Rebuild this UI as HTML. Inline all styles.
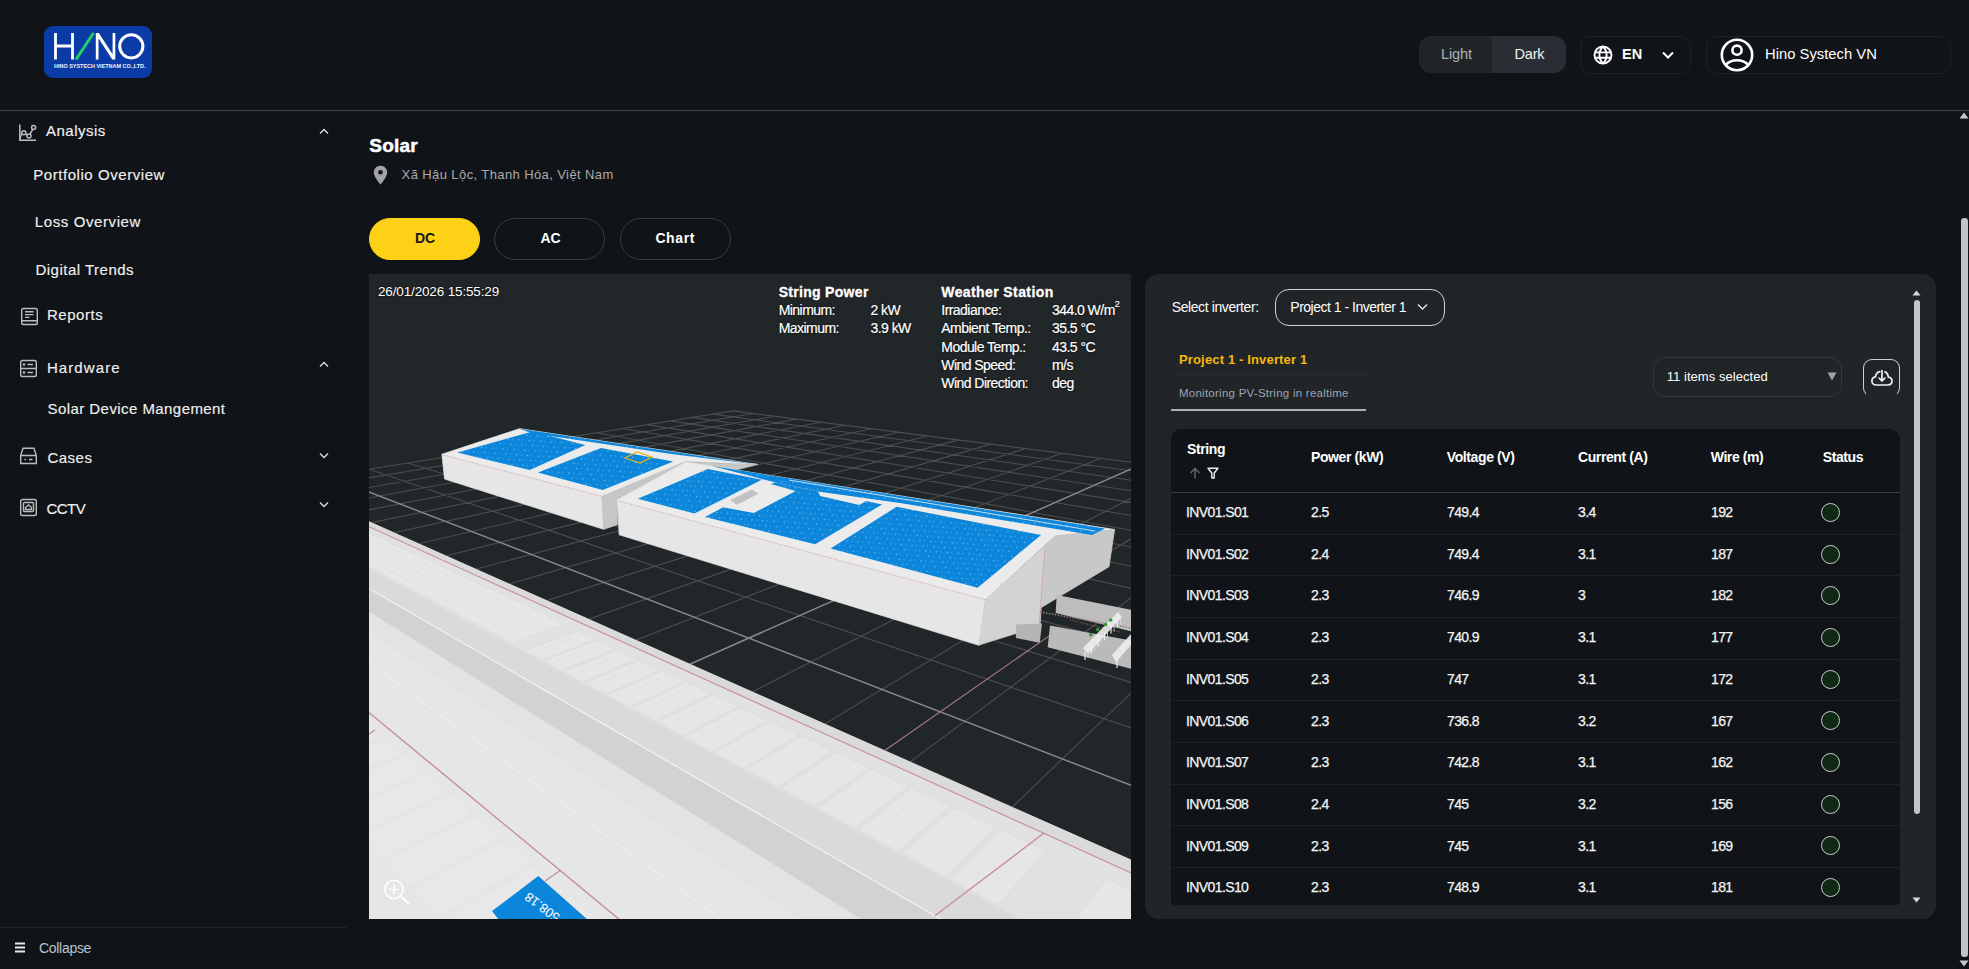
<!DOCTYPE html>
<html><head><meta charset="utf-8"><title>Solar</title>
<style>
html,body{margin:0;padding:0}
body{width:1969px;height:969px;overflow:hidden;background:#101418;position:relative;font-family:"Liberation Sans",sans-serif}
.abs{position:absolute}
.t{position:absolute;white-space:nowrap;line-height:1}
.t sup{font-size:9px;vertical-align:top;line-height:1;position:relative;top:-3px}
.logo{position:absolute;left:44px;top:26px;width:108px;height:52px;background:#0a3ba6;border-radius:9px}
.logo svg{display:block}
.tog{position:absolute;left:1419px;top:36px;width:147px;height:37px;border-radius:12px;overflow:hidden}
.tl{position:absolute;left:0;top:0;width:73px;height:37px;background:#212528}
.tr{position:absolute;left:73px;top:0;width:74px;height:37px;background:#2a2e34}
.box{position:absolute;border:1px solid #221f1d;border-radius:10px}
.btn{position:absolute;top:218px;width:109px;height:40px;border:1px solid #3a3b3c;border-radius:21px}
.viewer{position:absolute;left:369px;top:274px;width:762px;height:645px;overflow:hidden}
.viewer svg{display:block}
.panel{position:absolute;left:1145px;top:274px;width:791px;height:645px;background:#212528;border-radius:14px}
.tbl{position:absolute;left:1171px;top:429px;width:729px;height:476px;background:#101418;border-radius:10px 10px 4px 4px}
.st{width:17px;height:17px;border:1.3px solid #c9c9c9;border-radius:50%;background:#0f2915}
</style></head><body>
<div class="logo"><svg width="108" height="52" viewBox="0 0 108 52">
<path d="M11.5 7V33.5M28.5 7V33.5M11.5 20H28.5" stroke="#fff" stroke-width="2.8" fill="none"/><polygon points="51.8,6.9 54.8,6.9 68.6,28.3 68.6,6.9 71.3,6.9 71.3,33.6 68.3,33.6 54.5,12.2 54.5,33.6 51.8,33.6" fill="#fff"/>
<path d="M32 33.5L49.5 7" stroke="#1fcf6a" stroke-width="3"/>
<circle cx="87.3" cy="20.3" r="11.6" stroke="#fff" stroke-width="3" fill="none"/>
<text x="10" y="41.6" font-family="Liberation Sans" font-size="5.6" font-weight="bold" fill="#f4f4f4" textLength="91.5" lengthAdjust="spacingAndGlyphs">HINO SYSTECH VIETNAM CO.,LTD.</text>
</svg></div>
<div class="tog"><div class="tl"></div><div class="tr"></div></div>
<div class="t " style="left:1441px;top:46.73px;font-size:14.5px;color:#a9b2bb;letter-spacing:-0.1px">Light</div>
<div class="t " style="left:1514.5px;top:46.73px;font-size:14.5px;color:#f2f2f2;letter-spacing:-0.2px">Dark</div>
<div class="box" style="left:1580px;top:36px;width:109px;height:36px"></div>
<svg class="abs" style="left:1593px;top:45px" width="20" height="20" viewBox="0 0 24 24" fill="none" stroke="#fff" stroke-width="2.3">
<circle cx="12" cy="12" r="10.2"/><path d="M12 1.8C15 4.8 16.3 8 16.3 12S15 19.2 12 22.2M12 1.8C9 4.8 7.7 8 7.7 12S9 19.2 12 22.2M2.5 8.8H21.5M2.5 15.2H21.5" /></svg>
<div class="t " style="left:1622px;top:47.43px;font-size:14.5px;font-weight:bold;color:#fff">EN</div>
<svg class="abs" style="left:1661px;top:50px" width="14" height="10" viewBox="0 0 14 10"><path d="M2 2.5L7 7.5L12 2.5" stroke="#fff" stroke-width="2" fill="none"/></svg>
<div class="box" style="left:1706px;top:36px;width:243px;height:36px"></div>
<svg class="abs" style="left:1720px;top:38px" width="34" height="34" viewBox="0 0 34 34" fill="none" stroke="#fff" stroke-width="2.6">
<circle cx="17" cy="17" r="15.2"/><circle cx="17" cy="12.2" r="4.6"/><path d="M5.5 27C9 23.6 13 22.3 17 22.3S25 23.6 28.5 27"/></svg>
<div class="t " style="left:1765px;top:47.17px;font-size:14.8px;color:#fff">Hino Systech VN</div>
<div class="abs" style="left:0;top:110px;width:1969px;height:1px;background:#474543"></div>
<svg class="abs" style="left:18px;top:123px" width="19" height="19" viewBox="0 0 19 19" fill="none" stroke="#bdbdbd" stroke-width="1.5">
<path d="M1.8 1.5V17.3H18"/><circle cx="5.8" cy="9.8" r="2"/><circle cx="11" cy="13" r="2"/><circle cx="15.6" cy="4.5" r="2"/><path d="M7.5 11L9.4 12.1M12 11.2L14.7 6.4M1.8 16C2.5 13 3.5 11.5 4.2 11"/></svg>
<div class="t " style="left:46px;top:123.30px;font-size:15px;color:#f0f0f0;-webkit-text-stroke:0.15px #f0f0f0;letter-spacing:0.5px">Analysis</div>
<svg class="abs" style="left:319px;top:128px" width="10" height="7" viewBox="0 0 10 7"><path d="M1 5.5L5 1.5L9 5.5" stroke="#e0e0e0" stroke-width="1.3" fill="none"/></svg>
<div class="t " style="left:33.2px;top:167.40px;font-size:15px;color:#f0f0f0;-webkit-text-stroke:0.15px #f0f0f0;letter-spacing:0.56px">Portfolio Overview</div>
<div class="t " style="left:34.8px;top:214.40px;font-size:15px;color:#f0f0f0;-webkit-text-stroke:0.15px #f0f0f0;letter-spacing:0.6px">Loss Overview</div>
<div class="t " style="left:35.4px;top:262.10px;font-size:15px;color:#f0f0f0;-webkit-text-stroke:0.15px #f0f0f0;letter-spacing:0.5px">Digital Trends</div>
<svg class="abs" style="left:20px;top:307px" width="19" height="19" viewBox="0 0 19 19" fill="none" stroke="#bdbdbd" stroke-width="1.4">
<rect x="1.7" y="1.5" width="15.6" height="16" rx="1.8"/><path d="M1.7 13.8H17.3M5 4.8H13.5M5 7.6H13.5M5 10.4H9.5"/></svg>
<div class="t " style="left:46.9px;top:307.10px;font-size:15px;color:#f0f0f0;-webkit-text-stroke:0.15px #f0f0f0;letter-spacing:0.55px">Reports</div>
<svg class="abs" style="left:19px;top:359px" width="19" height="19" viewBox="0 0 19 19" fill="none" stroke="#bdbdbd" stroke-width="1.4">
<rect x="1.7" y="1.5" width="15.6" height="16" rx="1.8"/><path d="M1.7 9.5H17.3M8.5 5.5H14M8.5 13.5H14"/><circle cx="5" cy="5.5" r="0.6" fill="#bdbdbd"/><circle cx="5" cy="13.5" r="0.6" fill="#bdbdbd"/></svg>
<div class="t " style="left:46.9px;top:359.70px;font-size:15px;color:#f0f0f0;-webkit-text-stroke:0.15px #f0f0f0;letter-spacing:1.1px">Hardware</div>
<svg class="abs" style="left:319px;top:361px" width="10" height="7" viewBox="0 0 10 7"><path d="M1 5.5L5 1.5L9 5.5" stroke="#e0e0e0" stroke-width="1.3" fill="none"/></svg>
<div class="t " style="left:47.6px;top:401.10px;font-size:15px;color:#f0f0f0;-webkit-text-stroke:0.15px #f0f0f0;letter-spacing:0.43px">Solar Device Mangement</div>
<svg class="abs" style="left:19px;top:446px" width="19" height="19" viewBox="0 0 19 19" fill="none" stroke="#bdbdbd" stroke-width="1.4">
<path d="M1.7 9.5L4 2.3H15L17.3 9.5V17.5H1.7Z M1.7 9.5H17.3M5.5 13.5H7M10 13.5H13.5"/></svg>
<div class="t " style="left:47.4px;top:450.00px;font-size:15px;color:#f0f0f0;-webkit-text-stroke:0.15px #f0f0f0;letter-spacing:0.5px">Cases</div>
<svg class="abs" style="left:319px;top:452px" width="10" height="7" viewBox="0 0 10 7"><path d="M1 1.5L5 5.5L9 1.5" stroke="#e0e0e0" stroke-width="1.3" fill="none"/></svg>
<svg class="abs" style="left:19px;top:498px" width="19" height="19" viewBox="0 0 19 19" fill="none" stroke="#bdbdbd" stroke-width="1.4">
<rect x="1.7" y="1.5" width="15.6" height="16" rx="1.8"/><rect x="4.5" y="4.5" width="10" height="9" rx="1"/><path d="M6.5 11.5V9.5L9.5 7L12.5 9.5V11.5Z"/></svg>
<div class="t " style="left:46.4px;top:501.10px;font-size:15px;color:#f0f0f0;-webkit-text-stroke:0.15px #f0f0f0;letter-spacing:-0.5px">CCTV</div>
<svg class="abs" style="left:319px;top:501px" width="10" height="7" viewBox="0 0 10 7"><path d="M1 1.5L5 5.5L9 1.5" stroke="#e0e0e0" stroke-width="1.3" fill="none"/></svg>
<div class="abs" style="left:0;top:927px;width:347px;height:1px;background:#26221f"></div>
<svg class="abs" style="left:15px;top:942px" width="10" height="11" viewBox="0 0 10 11"><path d="M0 1.5H10M0 5.5H10M0 9.5H10" stroke="#e8e8e8" stroke-width="1.8"/></svg>
<div class="t " style="left:39px;top:941.15px;font-size:14px;color:#b9c3cd;letter-spacing:-0.3px">Collapse</div>
<div class="t " style="left:369.3px;top:135.82px;font-size:19px;font-weight:bold;color:#fff;letter-spacing:0.2px;-webkit-text-stroke:0.5px #fff">Solar</div>
<svg class="abs" style="left:373px;top:165px" width="15" height="20" viewBox="0 0 15 20"><path d="M7.5 0.8C3.8 0.8 0.8 3.7 0.8 7.4C0.8 11.8 7.5 19.5 7.5 19.5S14.2 11.8 14.2 7.4C14.2 3.7 11.2 0.8 7.5 0.8Z" fill="#a3a3a3"/><circle cx="7.5" cy="7.3" r="2.3" fill="#101418"/></svg>
<div class="t " style="left:401.6px;top:167.70px;font-size:13px;color:#ababab;letter-spacing:0.4px">Xã Hậu Lộc, Thanh Hóa, Việt Nam</div>
<div class="btn" style="left:369px;background:#fcd116;border-color:#fcd116"></div>
<div class="btn" style="left:494px"></div>
<div class="btn" style="left:620px"></div>
<div class="t " style="left:415px;top:231.35px;font-size:14px;font-weight:bold;color:#16181b">DC</div>
<div class="t " style="left:540.5px;top:231.35px;font-size:14px;font-weight:bold;color:#fff">AC</div>
<div class="t " style="left:655.4px;top:231.35px;font-size:14px;font-weight:bold;color:#fff;letter-spacing:0.6px">Chart</div>
<div class="viewer"><svg width="762" height="645" viewBox="0 0 762 645">
<rect width="762" height="645" fill="#212629"/>
<path d="M364.0 136.9L1923.6 337.9M364.0 136.9L-1225.8 391.5M344.1 140.1L1975.1 361.4M384.4 139.5L-1278.0 417.8M323.2 143.4L2034.4 388.5M405.7 142.3L-1338.3 448.2M301.2 146.9L2103.4 420.0M428.0 145.1L-1408.6 483.6M278.1 150.6L2184.7 457.2M451.5 148.2L-1491.9 525.6M253.8 154.5L2282.1 501.7M476.2 151.3L-1592.0 576.0M228.1 158.7L2400.6 555.9M502.2 154.7L-1714.5 637.8M201.0 163.0L2548.0 623.2M529.7 158.2L-1867.9 715.1M172.3 167.6L2736.5 709.4M558.7 162.0L-2065.8 814.9M141.9 172.5L2986.0 823.4M589.3 165.9L-2330.5 948.3M109.7 177.6L3331.6 981.4M621.8 170.1L-2703.0 1136.0M75.4 183.1L3842.3 1214.8M656.3 174.6L-3265.8 1419.7M38.9 189.0L4673.5 1594.7M693.0 179.3L-4214.7 1898.0M-0.1 195.2L6265.0 2322.1M732.1 184.3L-5274.7 2531.8M-86.6 209.1L4855.0 2403.2M818.5 195.5L-3718.1 2512.1M-134.7 216.8L4060.2 2413.3M866.5 201.6L-2939.8 2502.2M-186.6 225.1L3265.4 2423.4M918.0 208.3L-2161.5 2492.3M-242.6 234.0L2470.6 2433.5M973.6 215.4L-1383.2 2482.4M-303.5 243.8L1675.8 2443.6M1033.7 223.2L-604.9 2472.6M-369.7 254.4L881.0 2453.7M1098.9 231.6L173.4 2462.7M-442.0 266.0L86.2 2463.8M1170.0 240.7L951.6 2452.8M-521.4 278.7L-708.6 2473.9M1247.6 250.7L1729.9 2442.9M-608.9 292.7L-1503.4 2484.0M1332.8 261.7L2508.2 2433.0M-705.7 308.2L-2298.2 2494.1M1426.7 273.8L3286.5 2423.2M-813.6 325.5L-3093.0 2504.1M1530.8 287.2L4064.8 2413.3M-934.5 344.8L-3887.8 2514.2M1646.8 302.2L4843.1 2403.4M-1070.8 366.7L-4682.6 2524.3M1776.8 318.9L5621.4 2393.5M-1225.8 391.5L-5477.4 2534.4M1923.6 337.9L6399.7 2383.6" stroke="#4d4d4d" stroke-width="1.1" fill="none"/>
<path d="M-41.8 201.9L5649.8 2393.2M773.9 189.7L-4496.4 2522.0" stroke="#8c8c8c" stroke-width="1.4" fill="none"/>
<defs><pattern id="sp" width="9" height="6" patternUnits="userSpaceOnUse" patternTransform="rotate(-30)"><rect x="1" y="2" width="1.4" height="0.9" fill="#fff" opacity="0.55"/><rect x="5" y="4.5" width="1" height="0.8" fill="#fff" opacity="0.4"/></pattern></defs>
<polygon points="-86.6,209.1 1120.2,744.9 1031.0,926.0 -369.0,926.0" fill="#e6e6e6" />
<polygon points="-86.6,209.1 1120.2,744.9 1118.6,761.0 -93.6,210.2" fill="#dadada" />
<polygon points="-93.6,210.2 1118.6,761.0 1105.9,889.5 -142.2,218.0" fill="#e1e1e1" />
<polygon points="-1.4,258.2 195.2,350.0 142.8,368.2 -45.8,267.6" fill="#e7e7e7" stroke="#dcdcdc" stroke-width="0.6"/>
<line x1="0.4" y1="264.0" x2="161.8" y2="341.0" stroke="#d6d6d6" stroke-width="0.7" stroke-dasharray="2 3"/>
<line x1="-6.9" y1="265.6" x2="153.4" y2="343.7" stroke="#d6d6d6" stroke-width="0.7" stroke-dasharray="2 3"/>
<line x1="-14.3" y1="267.3" x2="144.9" y2="346.5" stroke="#d6d6d6" stroke-width="0.7" stroke-dasharray="2 3"/>
<line x1="-21.8" y1="268.9" x2="136.2" y2="349.3" stroke="#d6d6d6" stroke-width="0.7" stroke-dasharray="2 3"/>
<line x1="-29.4" y1="270.6" x2="127.4" y2="352.2" stroke="#d6d6d6" stroke-width="0.7" stroke-dasharray="2 3"/>
<polygon points="208.6,357.3 226.3,365.6 172.2,385.8 155.0,376.6" fill="#e6e6e6" stroke="#d9d9d9" stroke-width="0.6"/>
<line x1="203.7" y1="363.7" x2="169.6" y2="376.1" stroke="#d2d2d2" stroke-width="0.7" stroke-dasharray="1.5 1.5"/>
<polygon points="228.1,366.4 246.7,375.2 192.2,396.5 174.0,386.8" fill="#e6e6e6" stroke="#d9d9d9" stroke-width="0.6"/>
<line x1="223.4" y1="373.1" x2="189.0" y2="386.2" stroke="#d2d2d2" stroke-width="0.7" stroke-dasharray="1.5 1.5"/>
<polygon points="248.6,376.1 268.4,385.3 213.5,407.9 194.1,397.5" fill="#e6e6e6" stroke="#d9d9d9" stroke-width="0.6"/>
<line x1="244.2" y1="383.1" x2="209.5" y2="397.0" stroke="#d2d2d2" stroke-width="0.7" stroke-dasharray="1.5 1.5"/>
<polygon points="270.3,386.2 291.3,396.0 236.0,420.0 215.4,409.0" fill="#e6e6e6" stroke="#d9d9d9" stroke-width="0.6"/>
<line x1="266.2" y1="393.7" x2="231.3" y2="408.4" stroke="#d2d2d2" stroke-width="0.7" stroke-dasharray="1.5 1.5"/>
<polygon points="293.4,397.0 315.6,407.4 260.1,432.9 238.1,421.1" fill="#e6e6e6" stroke="#d9d9d9" stroke-width="0.6"/>
<line x1="289.6" y1="405.0" x2="254.5" y2="420.5" stroke="#d2d2d2" stroke-width="0.7" stroke-dasharray="1.5 1.5"/>
<polygon points="317.8,408.5 341.4,419.5 285.8,446.7 262.3,434.1" fill="#e6e6e6" stroke="#d9d9d9" stroke-width="0.6"/>
<line x1="314.4" y1="416.9" x2="279.2" y2="433.5" stroke="#d2d2d2" stroke-width="0.7" stroke-dasharray="1.5 1.5"/>
<polygon points="343.8,420.6 369.0,432.4 313.2,461.4 288.1,448.0" fill="#e6e6e6" stroke="#d9d9d9" stroke-width="0.6"/>
<line x1="340.9" y1="429.6" x2="305.6" y2="447.3" stroke="#d2d2d2" stroke-width="0.7" stroke-dasharray="1.5 1.5"/>
<polygon points="371.5,433.6 398.4,446.2 342.7,477.2 315.8,462.8" fill="#e6e6e6" stroke="#d9d9d9" stroke-width="0.6"/>
<line x1="369.1" y1="443.2" x2="333.8" y2="462.1" stroke="#d2d2d2" stroke-width="0.7" stroke-dasharray="1.5 1.5"/>
<polygon points="401.1,447.5 429.9,461.0 374.4,494.2 345.4,478.7" fill="#e6e6e6" stroke="#d9d9d9" stroke-width="0.6"/>
<line x1="399.3" y1="457.7" x2="364.0" y2="477.9" stroke="#d2d2d2" stroke-width="0.7" stroke-dasharray="1.5 1.5"/>
<polygon points="432.8,462.3 463.7,476.8 408.5,512.5 377.3,495.8" fill="#e6e6e6" stroke="#d9d9d9" stroke-width="0.6"/>
<line x1="431.7" y1="473.3" x2="396.6" y2="495.0" stroke="#d2d2d2" stroke-width="0.7" stroke-dasharray="1.5 1.5"/>
<polygon points="466.8,478.2 500.0,493.8 445.4,532.3 411.7,514.2" fill="#e6e6e6" stroke="#d9d9d9" stroke-width="0.6"/>
<line x1="466.5" y1="490.0" x2="431.7" y2="513.3" stroke="#d2d2d2" stroke-width="0.7" stroke-dasharray="1.5 1.5"/>
<polygon points="503.3,495.3 539.1,512.1 485.5,553.8 448.9,534.1" fill="#e6e6e6" stroke="#d9d9d9" stroke-width="0.6"/>
<line x1="504.0" y1="508.1" x2="469.7" y2="533.2" stroke="#d2d2d2" stroke-width="0.7" stroke-dasharray="1.5 1.5"/>
<polygon points="542.8,513.8 581.5,531.9 529.1,577.1 489.2,555.8" fill="#e6e6e6" stroke="#d9d9d9" stroke-width="0.6"/>
<line x1="544.6" y1="527.5" x2="510.8" y2="554.8" stroke="#d2d2d2" stroke-width="0.7" stroke-dasharray="1.5 1.5"/>
<polygon points="585.4,533.8 627.4,553.5 576.8,602.7 533.2,579.3" fill="#e6e6e6" stroke="#d9d9d9" stroke-width="0.6"/>
<line x1="588.5" y1="548.7" x2="555.7" y2="578.3" stroke="#d2d2d2" stroke-width="0.7" stroke-dasharray="1.5 1.5"/>
<polygon points="631.7,555.5 677.5,576.9 629.0,630.7 581.2,605.1" fill="#e6e6e6" stroke="#d9d9d9" stroke-width="0.6"/>
<line x1="636.4" y1="571.7" x2="604.7" y2="603.9" stroke="#d2d2d2" stroke-width="0.7" stroke-dasharray="1.5 1.5"/>
<polygon points="737.3,604.9 792.2,630.6 750.4,695.8 692.0,664.5" fill="#e6e6e6" stroke="#d9d9d9" stroke-width="0.6"/>
<line x1="745.8" y1="624.3" x2="717.7" y2="663.1" stroke="#d2d2d2" stroke-width="0.7" stroke-dasharray="1.5 1.5"/>
<polygon points="797.8,633.2 858.3,661.6 821.5,733.9 756.4,699.0" fill="#e6e6e6" stroke="#d9d9d9" stroke-width="0.6"/>
<line x1="808.8" y1="654.5" x2="783.4" y2="697.5" stroke="#d2d2d2" stroke-width="0.7" stroke-dasharray="1.5 1.5"/>
<polygon points="864.5,664.5 931.6,695.9 901.1,776.5 828.2,737.5" fill="#e6e6e6" stroke="#d9d9d9" stroke-width="0.6"/>
<line x1="878.6" y1="688.1" x2="856.6" y2="735.8" stroke="#d2d2d2" stroke-width="0.7" stroke-dasharray="1.5 1.5"/>
<line x1="95.2" y1="356.0" x2="139.9" y2="380.8" stroke="#c58d98" stroke-width="1" />
<polygon points="-142.2,218.0 1105.9,889.5 1099.9,950.6 -161.7,221.1" fill="#dadada" />
<polygon points="-161.7,221.1 1099.9,950.6 1093.0,1020.6 -181.7,224.3" fill="#d2d2d2" />
<line x1="-161.7" y1="221.1" x2="1099.9" y2="950.6" stroke="#f2f2f2" stroke-width="1.2" />
<polygon points="-181.7,224.3 1093.0,1020.6 1087.0,1081.5 -197.4,226.8" fill="#e3e3e3" />
<line x1="-93.6" y1="210.2" x2="1118.6" y2="761.0" stroke="#c58d98" stroke-width="1.1" />
<line x1="-246.7" y1="234.7" x2="1063.7" y2="1317.6" stroke="#c58d98" stroke-width="1.4" />
<line x1="-218.5" y1="230.2" x2="1077.9" y2="1173.3" stroke="#f0f0f0" stroke-width="1" />
<line x1="687.0" y1="357.1" x2="515.7" y2="476.5" stroke="#a87a84" stroke-width="1.1" />
<line x1="674.7" y1="559.3" x2="565.9" y2="641.8" stroke="#c58d98" stroke-width="1.4" />
<line x1="529.3" y1="668.5" x2="262.8" y2="873.2" stroke="#c58d98" stroke-width="1.3" />
<polygon points="-51.3,406.7 -37.9,418.1 -116.0,444.4 -127.9,431.5" fill="#e8e8e8" stroke="#e0e0e0" stroke-width="0.6"/>
<polygon points="-36.2,419.6 -21.8,431.8 -101.7,460.0 -114.5,446.1" fill="#e8e8e8" stroke="#e0e0e0" stroke-width="0.6"/>
<polygon points="-19.9,433.4 -4.5,446.5 -86.4,476.7 -100.1,461.8" fill="#e8e8e8" stroke="#e0e0e0" stroke-width="0.6"/>
<polygon points="-2.5,448.2 14.0,462.3 -69.8,494.9 -84.6,478.7" fill="#e8e8e8" stroke="#e0e0e0" stroke-width="0.6"/>
<polygon points="16.2,464.1 34.1,479.3 -51.8,514.5 -67.8,497.0" fill="#e8e8e8" stroke="#e0e0e0" stroke-width="0.6"/>
<polygon points="36.4,481.3 55.7,497.7 -32.2,535.8 -49.7,516.8" fill="#e8e8e8" stroke="#e0e0e0" stroke-width="0.6"/>
<polygon points="58.2,499.8 79.2,517.6 -10.9,559.1 -29.9,538.3" fill="#e8e8e8" stroke="#e0e0e0" stroke-width="0.6"/>
<polygon points="81.9,519.9 104.7,539.3 12.5,584.6 -8.4,561.8" fill="#e8e8e8" stroke="#e0e0e0" stroke-width="0.6"/>
<polygon points="107.7,541.9 132.6,563.0 38.3,612.7 15.2,587.6" fill="#e8e8e8" stroke="#e0e0e0" stroke-width="0.6"/>
<polygon points="135.8,565.8 163.2,589.0 66.7,643.8 41.3,616.0" fill="#e8e8e8" stroke="#e0e0e0" stroke-width="0.6"/>
<polygon points="166.8,592.1 196.9,617.7 98.4,678.3 70.1,647.5" fill="#e8e8e8" stroke="#e0e0e0" stroke-width="0.6"/>
<polygon points="200.8,621.0 234.2,649.4 133.7,716.9 102.1,682.4" fill="#e8e8e8" stroke="#e0e0e0" stroke-width="0.6"/>
<polygon points="238.6,653.1 275.7,684.7 173.6,760.4 137.9,721.5" fill="#e8e8e8" stroke="#e0e0e0" stroke-width="0.6"/>
<polygon points="280.6,688.8 322.2,724.2 218.8,809.7 178.3,765.6" fill="#e8e8e8" stroke="#e0e0e0" stroke-width="0.6"/>
<polygon points="123.0,637.0 169.3,602.0 219.0,646.0 130.0,646.0" fill="#0b86db" />
<line x1="176.0" y1="607.0" x2="192.0" y2="596.0" stroke="#c58d98" stroke-width="1.3" />
<line x1="0.0" y1="460.0" x2="6.0" y2="456.0" stroke="#c58d98" stroke-width="1.2" />
<text x="174" y="635" fill="#fff" font-family="Liberation Sans" font-size="13" transform="rotate(217 174 632)" text-anchor="middle">508.18</text>
<circle cx="25" cy="615.5" r="9" fill="none" stroke="#fff" stroke-width="1.6"/>
<line x1="31.5" y1="622.0" x2="40.0" y2="630.0" stroke="#fff" stroke-width="1.8" />
<line x1="20.0" y1="615.5" x2="30.0" y2="615.5" stroke="#fff" stroke-width="1.4" />
<line x1="25.0" y1="610.5" x2="25.0" y2="620.5" stroke="#fff" stroke-width="1.4" />
<polygon points="72.9,180.3 232.9,222.4 234.7,255.3 75.6,205.0" fill="#e6e6e6" stroke="#e6e6e6" stroke-width="0.8" stroke-linejoin="round"/>
<polygon points="72.9,180.3 150.6,154.7 388.3,190.4 317.0,187.6 232.9,222.4" fill="#ebebeb" stroke="#ebebeb" stroke-width="0.8" stroke-linejoin="round"/>
<polygon points="232.9,222.4 315.2,188.2 388.3,190.4 248.4,226.0 248.4,250.7 234.7,255.3" fill="#c6c6c6" stroke="#c6c6c6" stroke-width="0.8" stroke-linejoin="round"/>
<polygon points="88.4,178.5 163.4,157.5 216.4,170.9 160.7,195.9" fill="#0b86da" />
<polygon points="168.9,198.6 232.0,173.9 304.2,187.6 233.8,216.0" fill="#0b86da" />
<polygon points="150.6,154.7 388.3,190.4 304.0,180.3 163.0,159.3" fill="#0b86da" />
<polygon points="256.0,184.0 268.0,178.0 283.0,183.0 271.0,189.0" fill="none" stroke="#e8b21a" stroke-width="1.3"/>
<polygon points="248.4,226.0 616.6,325.8 609.9,371.3 250.2,260.8" fill="#e6e6e6" stroke="#e6e6e6" stroke-width="0.8" stroke-linejoin="round"/>
<polygon points="248.4,226.0 317.0,188.2 745.6,255.5 686.0,262.0 616.6,325.8" fill="#ebebeb" stroke="#ebebeb" stroke-width="0.8" stroke-linejoin="round"/>
<polygon points="616.6,325.8 686.0,262.0 745.6,255.5 740.0,292.7 610.0,371.0" fill="#c8c8c8" stroke="#c8c8c8" stroke-width="0.8" stroke-linejoin="round"/>
<polygon points="616.6,325.8 676.0,273.0 671.0,352.0 610.0,371.0" fill="#d3d3d3" stroke="#d3d3d3" stroke-width="0.8" stroke-linejoin="round"/>
<line x1="676.0" y1="275.0" x2="670.0" y2="352.0" stroke="#cf9aa3" stroke-width="0.8" />
<polygon points="268.8,224.7 325.4,239.5 392.8,205.8 338.9,195.0" fill="#0b86da" />
<polygon points="336.0,243.0 354.1,233.3 384.8,239.0 426.8,216.9 401.8,210.0 406.4,208.4 448.9,217.4 451.2,222.0 490.4,231.1 497.2,227.1 513.1,230.5 446.1,270.2" fill="#0b86da" />
<polygon points="362.0,226.0 383.0,216.0 389.0,219.5 368.0,230.5" fill="#c2c2c2" stroke="#c2c2c2" stroke-width="0.8" stroke-linejoin="round"/>
<polygon points="461.6,274.6 608.6,313.7 672.0,261.1 527.6,232.8" fill="#0b86da" />
<polygon points="343.0,192.0 736.0,254.5 723.0,261.0 531.0,229.0 448.9,217.4 406.4,208.4" fill="#0b86da" />
<line x1="420.0" y1="206.0" x2="726.0" y2="257.0" stroke="#d8e6f2" stroke-width="0.9" />
<line x1="74.0" y1="181.0" x2="232.9" y2="222.4" stroke="#d9a0a8" stroke-width="0.9" stroke-dasharray="1.5 1.5"/>
<line x1="250.0" y1="227.0" x2="616.6" y2="325.8" stroke="#d9a0a8" stroke-width="0.9" stroke-dasharray="1.5 1.5"/>
<polygon points="687.8,321.0 762.0,335.7 762.0,357.3 686.6,339.0" fill="#bdbdbd" />
<polygon points="646.9,350.5 673.0,349.4 670.7,368.7 646.9,364.1" fill="#b5b5b5" />
<polygon points="681.0,351.6 762.0,366.4 762.0,394.8 678.7,373.2" fill="#bababa" />
<line x1="671.0" y1="338.0" x2="762.0" y2="354.0" stroke="#a07880" stroke-width="1.5" stroke-dasharray="1.5 1.5"/>
<line x1="701.0" y1="346.0" x2="751.0" y2="358.0" stroke="#a07880" stroke-width="1" stroke-dasharray="1 1.5"/>
<polygon points="714.0,374.0 749.0,338.0 753.0,343.0 719.0,380.0" fill="#eeeeee" opacity="0.9"/>
<line x1="716.0" y1="378.0" x2="716.0" y2="386.0" stroke="#f4f4f4" stroke-width="1.1" />
<line x1="719.0" y1="376.0" x2="719.0" y2="384.0" stroke="#dcdcdc" stroke-width="0.8" />
<line x1="722.5" y1="371.4" x2="722.5" y2="379.4" stroke="#f4f4f4" stroke-width="1.1" />
<line x1="725.5" y1="369.4" x2="725.5" y2="377.4" stroke="#dcdcdc" stroke-width="0.8" />
<line x1="729.0" y1="364.8" x2="729.0" y2="372.8" stroke="#f4f4f4" stroke-width="1.1" />
<line x1="732.0" y1="362.8" x2="732.0" y2="370.8" stroke="#dcdcdc" stroke-width="0.8" />
<line x1="735.5" y1="358.2" x2="735.5" y2="366.2" stroke="#f4f4f4" stroke-width="1.1" />
<line x1="738.5" y1="356.2" x2="738.5" y2="364.2" stroke="#dcdcdc" stroke-width="0.8" />
<line x1="742.0" y1="351.6" x2="742.0" y2="359.6" stroke="#f4f4f4" stroke-width="1.1" />
<line x1="745.0" y1="349.6" x2="745.0" y2="357.6" stroke="#dcdcdc" stroke-width="0.8" />
<line x1="748.5" y1="345.0" x2="748.5" y2="353.0" stroke="#f4f4f4" stroke-width="1.1" />
<line x1="751.5" y1="343.0" x2="751.5" y2="351.0" stroke="#dcdcdc" stroke-width="0.8" />
<polygon points="743.0,381.0 762.0,360.0 762.0,371.0 747.0,388.0" fill="#eeeeee" opacity="0.9"/>
<line x1="748.0" y1="386.0" x2="748.0" y2="394.0" stroke="#f4f4f4" stroke-width="1.1" />
<circle cx="721.8" cy="360.7" r="1.8" fill="#2e9a2e"/>
<circle cx="728.7" cy="355.6" r="1.8" fill="#2e9a2e"/>
<circle cx="736.6" cy="350.5" r="1.8" fill="#2e9a2e"/>
<circle cx="741.7" cy="346.0" r="1.8" fill="#2e9a2e"/>
<polygon points="88.4,178.5 163.4,157.5 216.4,170.9 160.7,195.9" fill="url(#sp)" />
<polygon points="168.9,198.6 232.0,173.9 304.2,187.6 233.8,216.0" fill="url(#sp)" />
<polygon points="150.6,154.7 388.3,190.4 304.0,180.3 163.0,159.3" fill="url(#sp)" />
<polygon points="268.8,224.7 325.4,239.5 392.8,205.8 338.9,195.0" fill="url(#sp)" />
<polygon points="336.0,243.0 354.1,233.3 384.8,239.0 426.8,216.9 401.8,210.0 406.4,208.4 448.9,217.4 451.2,222.0 490.4,231.1 497.2,227.1 513.1,230.5 446.1,270.2" fill="url(#sp)" />
<polygon points="461.6,274.6 608.6,313.7 672.0,261.1 527.6,232.8" fill="url(#sp)" />
<polygon points="343.0,192.0 736.0,254.5 723.0,261.0 531.0,229.0 448.9,217.4 406.4,208.4" fill="url(#sp)" />
</svg></div>
<div class="t " style="left:378px;top:285.07px;font-size:13.5px;color:#fff;letter-spacing:-0.15px;text-shadow:0 0 2px #000">26/01/2026 15:55:29</div>
<div class="t " style="left:778.7px;top:285.15px;font-size:14px;font-weight:bold;color:#fff;letter-spacing:0.3px;-webkit-text-stroke:0.3px #fff">String Power</div>
<div class="t " style="left:941.3px;top:285.15px;font-size:14px;font-weight:bold;color:#fff;letter-spacing:0.4px;-webkit-text-stroke:0.3px #fff">Weather Station</div>
<div class="t " style="left:778.7px;top:302.75px;font-size:14px;color:#fff;letter-spacing:-0.55px;text-shadow:0 0 2px #000;-webkit-text-stroke:0.2px #fff">Minimum:</div>
<div class="t " style="left:870.5px;top:302.75px;font-size:14px;color:#fff;letter-spacing:-0.55px;text-shadow:0 0 2px #000;-webkit-text-stroke:0.2px #fff">2 kW</div>
<div class="t " style="left:778.7px;top:321.35px;font-size:14px;color:#fff;letter-spacing:-0.55px;text-shadow:0 0 2px #000;-webkit-text-stroke:0.2px #fff">Maximum:</div>
<div class="t " style="left:870.5px;top:321.35px;font-size:14px;color:#fff;letter-spacing:-0.55px;text-shadow:0 0 2px #000;-webkit-text-stroke:0.2px #fff">3.9 kW</div>
<div class="t " style="left:941.3px;top:302.75px;font-size:14px;color:#fff;letter-spacing:-0.55px;text-shadow:0 0 2px #000;-webkit-text-stroke:0.2px #fff">Irradiance:</div>
<div class="t " style="left:1052px;top:302.75px;font-size:14px;color:#fff;letter-spacing:-0.55px;text-shadow:0 0 2px #000;-webkit-text-stroke:0.2px #fff">344.0 W/m<sup>2</sup></div>
<div class="t " style="left:941.3px;top:321.35px;font-size:14px;color:#fff;letter-spacing:-0.55px;text-shadow:0 0 2px #000;-webkit-text-stroke:0.2px #fff">Ambient Temp.:</div>
<div class="t " style="left:1052px;top:321.35px;font-size:14px;color:#fff;letter-spacing:-0.55px;text-shadow:0 0 2px #000;-webkit-text-stroke:0.2px #fff">35.5 °C</div>
<div class="t " style="left:941.3px;top:339.55px;font-size:14px;color:#fff;letter-spacing:-0.55px;text-shadow:0 0 2px #000;-webkit-text-stroke:0.2px #fff">Module Temp.:</div>
<div class="t " style="left:1052px;top:339.55px;font-size:14px;color:#fff;letter-spacing:-0.55px;text-shadow:0 0 2px #000;-webkit-text-stroke:0.2px #fff">43.5 °C</div>
<div class="t " style="left:941.3px;top:357.75px;font-size:14px;color:#fff;letter-spacing:-0.55px;text-shadow:0 0 2px #000;-webkit-text-stroke:0.2px #fff">Wind Speed:</div>
<div class="t " style="left:1052px;top:357.75px;font-size:14px;color:#fff;letter-spacing:-0.55px;text-shadow:0 0 2px #000;-webkit-text-stroke:0.2px #fff">m/s</div>
<div class="t " style="left:941.3px;top:375.95px;font-size:14px;color:#fff;letter-spacing:-0.55px;text-shadow:0 0 2px #000;-webkit-text-stroke:0.2px #fff">Wind Direction:</div>
<div class="t " style="left:1052px;top:375.95px;font-size:14px;color:#fff;letter-spacing:-0.55px;text-shadow:0 0 2px #000;-webkit-text-stroke:0.2px #fff">deg</div>
<div class="panel"></div>
<div class="t " style="left:1171.7px;top:300.05px;font-size:14px;color:#fff;letter-spacing:-0.4px">Select inverter:</div>
<div class="abs" style="left:1275px;top:289px;width:168px;height:35px;border:1.3px solid #d4d4d4;border-radius:14px"></div>
<div class="t " style="left:1290.3px;top:300.05px;font-size:14px;color:#fff;letter-spacing:-0.5px">Project 1 - Inverter 1</div>
<svg class="abs" style="left:1417px;top:303px" width="11" height="8" viewBox="0 0 11 8"><path d="M1 1.5L5.5 6L10 1.5" stroke="#e6e6e6" stroke-width="1.3" fill="none"/></svg>
<div class="t " style="left:1179px;top:353.20px;font-size:13px;color:#f6b70d;font-weight:bold;letter-spacing:0.15px">Project 1 - Inverter 1</div>
<div class="abs" style="left:1172px;top:374px;width:194px;height:1px;background:#2b2c2c"></div>
<div class="t " style="left:1179px;top:388.27px;font-size:11.5px;color:#9ba6b1;letter-spacing:0.25px">Monitoring PV-String in realtime</div>
<div class="abs" style="left:1171px;top:409px;width:195px;height:1.5px;background:#aab2ba"></div>
<div class="abs" style="left:1653px;top:357px;width:187px;height:38px;border:1px solid #3b3833;border-radius:12px"></div>
<div class="t " style="left:1666.7px;top:369.50px;font-size:13px;color:#fff;letter-spacing:0.05px">11 items selected</div>
<svg class="abs" style="left:1827px;top:372px" width="10" height="9" viewBox="0 0 10 9"><path d="M0.5 0.5H9.5L5 8.5Z" fill="#9aa5b1"/></svg>
<div class="abs" style="left:1863px;top:359px;width:35px;height:36px;border:1.3px solid #cfcfcf;border-bottom-color:transparent;border-radius:9px"></div>
<svg class="abs" style="left:1870px;top:368px" width="23" height="19" viewBox="0 0 23 19" fill="none" stroke="#f0f0f0" stroke-width="1.7" stroke-linecap="round" stroke-linejoin="round"><path d="M9.8 3.6C7.3 4.2 5.8 6.2 5.6 8.8C3.3 9 1.9 10.8 1.9 13C1.9 15.4 3.8 17 6.2 17H17.8C20.2 17 22 15.4 22 13.1C22 11 20.5 9.4 18.4 9.2C18.2 6.9 17 4.9 15 3.8"/><path d="M12 2.6V13M9.2 10.2L12 13L14.8 10.2"/></svg>
<div class="tbl">
<div class="t" style="left:16.0px;top:12.65px;font-size:14px;font-weight:bold;color:#fff;letter-spacing:-0.4px">String</div>
<div class="t" style="left:140.0px;top:20.75px;font-size:14px;font-weight:bold;color:#fff;letter-spacing:-0.4px">Power (kW)</div>
<div class="t" style="left:275.8px;top:20.75px;font-size:14px;font-weight:bold;color:#fff;letter-spacing:-0.4px">Voltage (V)</div>
<div class="t" style="left:407.0px;top:20.75px;font-size:14px;font-weight:bold;color:#fff;letter-spacing:-0.4px">Current (A)</div>
<div class="t" style="left:539.7px;top:20.75px;font-size:14px;font-weight:bold;color:#fff;letter-spacing:-0.4px">Wire (m)</div>
<div class="t" style="left:651.7px;top:21.05px;font-size:14px;font-weight:bold;color:#fff;letter-spacing:-0.4px">Status</div>
<svg class="abs" style="left:18px;top:38px" width="12" height="12" viewBox="0 0 12 12"><path d="M6 11.5V1.5M1.5 6L6 1.5L10.5 6" stroke="#6e6e6e" stroke-width="1.3" fill="none"/></svg>
<svg class="abs" style="left:36px;top:38px" width="12" height="12" viewBox="0 0 12 12"><path d="M1 1.2H11L7.2 6V11H4.8V6Z" stroke="#f0f0f0" stroke-width="1.4" fill="none" stroke-linejoin="round"/></svg>
<div class="abs" style="left:0;top:63px;width:729px;height:1px;background:#3d3d3d"></div>
<div class="t" style="left:15.0px;top:76.15px;font-size:14px;color:#f4f4f4;letter-spacing:-0.6px;-webkit-text-stroke:0.25px #f4f4f4">INV01.S01</div>
<div class="t" style="left:140.0px;top:76.15px;font-size:14px;color:#f4f4f4;letter-spacing:-0.6px;-webkit-text-stroke:0.25px #f4f4f4">2.5</div>
<div class="t" style="left:276.0px;top:76.15px;font-size:14px;color:#f4f4f4;letter-spacing:-0.6px;-webkit-text-stroke:0.25px #f4f4f4">749.4</div>
<div class="t" style="left:407.0px;top:76.15px;font-size:14px;color:#f4f4f4;letter-spacing:-0.6px;-webkit-text-stroke:0.25px #f4f4f4">3.4</div>
<div class="t" style="left:540.0px;top:76.15px;font-size:14px;color:#f4f4f4;letter-spacing:-0.6px;-webkit-text-stroke:0.25px #f4f4f4">192</div>
<div class="abs st" style="left:650px;top:74.10px"></div>
<div class="abs" style="left:0;top:104.50px;width:729px;height:1px;background:#1e2124"></div>
<div class="t" style="left:15.0px;top:117.82px;font-size:14px;color:#f4f4f4;letter-spacing:-0.6px;-webkit-text-stroke:0.25px #f4f4f4">INV01.S02</div>
<div class="t" style="left:140.0px;top:117.82px;font-size:14px;color:#f4f4f4;letter-spacing:-0.6px;-webkit-text-stroke:0.25px #f4f4f4">2.4</div>
<div class="t" style="left:276.0px;top:117.82px;font-size:14px;color:#f4f4f4;letter-spacing:-0.6px;-webkit-text-stroke:0.25px #f4f4f4">749.4</div>
<div class="t" style="left:407.0px;top:117.82px;font-size:14px;color:#f4f4f4;letter-spacing:-0.6px;-webkit-text-stroke:0.25px #f4f4f4">3.1</div>
<div class="t" style="left:540.0px;top:117.82px;font-size:14px;color:#f4f4f4;letter-spacing:-0.6px;-webkit-text-stroke:0.25px #f4f4f4">187</div>
<div class="abs st" style="left:650px;top:115.77px"></div>
<div class="abs" style="left:0;top:146.17px;width:729px;height:1px;background:#1e2124"></div>
<div class="t" style="left:15.0px;top:159.49px;font-size:14px;color:#f4f4f4;letter-spacing:-0.6px;-webkit-text-stroke:0.25px #f4f4f4">INV01.S03</div>
<div class="t" style="left:140.0px;top:159.49px;font-size:14px;color:#f4f4f4;letter-spacing:-0.6px;-webkit-text-stroke:0.25px #f4f4f4">2.3</div>
<div class="t" style="left:276.0px;top:159.49px;font-size:14px;color:#f4f4f4;letter-spacing:-0.6px;-webkit-text-stroke:0.25px #f4f4f4">746.9</div>
<div class="t" style="left:407.0px;top:159.49px;font-size:14px;color:#f4f4f4;letter-spacing:-0.6px;-webkit-text-stroke:0.25px #f4f4f4">3</div>
<div class="t" style="left:540.0px;top:159.49px;font-size:14px;color:#f4f4f4;letter-spacing:-0.6px;-webkit-text-stroke:0.25px #f4f4f4">182</div>
<div class="abs st" style="left:650px;top:157.44px"></div>
<div class="abs" style="left:0;top:187.84px;width:729px;height:1px;background:#1e2124"></div>
<div class="t" style="left:15.0px;top:201.16px;font-size:14px;color:#f4f4f4;letter-spacing:-0.6px;-webkit-text-stroke:0.25px #f4f4f4">INV01.S04</div>
<div class="t" style="left:140.0px;top:201.16px;font-size:14px;color:#f4f4f4;letter-spacing:-0.6px;-webkit-text-stroke:0.25px #f4f4f4">2.3</div>
<div class="t" style="left:276.0px;top:201.16px;font-size:14px;color:#f4f4f4;letter-spacing:-0.6px;-webkit-text-stroke:0.25px #f4f4f4">740.9</div>
<div class="t" style="left:407.0px;top:201.16px;font-size:14px;color:#f4f4f4;letter-spacing:-0.6px;-webkit-text-stroke:0.25px #f4f4f4">3.1</div>
<div class="t" style="left:540.0px;top:201.16px;font-size:14px;color:#f4f4f4;letter-spacing:-0.6px;-webkit-text-stroke:0.25px #f4f4f4">177</div>
<div class="abs st" style="left:650px;top:199.11px"></div>
<div class="abs" style="left:0;top:229.51px;width:729px;height:1px;background:#1e2124"></div>
<div class="t" style="left:15.0px;top:242.83px;font-size:14px;color:#f4f4f4;letter-spacing:-0.6px;-webkit-text-stroke:0.25px #f4f4f4">INV01.S05</div>
<div class="t" style="left:140.0px;top:242.83px;font-size:14px;color:#f4f4f4;letter-spacing:-0.6px;-webkit-text-stroke:0.25px #f4f4f4">2.3</div>
<div class="t" style="left:276.0px;top:242.83px;font-size:14px;color:#f4f4f4;letter-spacing:-0.6px;-webkit-text-stroke:0.25px #f4f4f4">747</div>
<div class="t" style="left:407.0px;top:242.83px;font-size:14px;color:#f4f4f4;letter-spacing:-0.6px;-webkit-text-stroke:0.25px #f4f4f4">3.1</div>
<div class="t" style="left:540.0px;top:242.83px;font-size:14px;color:#f4f4f4;letter-spacing:-0.6px;-webkit-text-stroke:0.25px #f4f4f4">172</div>
<div class="abs st" style="left:650px;top:240.78px"></div>
<div class="abs" style="left:0;top:271.18px;width:729px;height:1px;background:#1e2124"></div>
<div class="t" style="left:15.0px;top:284.50px;font-size:14px;color:#f4f4f4;letter-spacing:-0.6px;-webkit-text-stroke:0.25px #f4f4f4">INV01.S06</div>
<div class="t" style="left:140.0px;top:284.50px;font-size:14px;color:#f4f4f4;letter-spacing:-0.6px;-webkit-text-stroke:0.25px #f4f4f4">2.3</div>
<div class="t" style="left:276.0px;top:284.50px;font-size:14px;color:#f4f4f4;letter-spacing:-0.6px;-webkit-text-stroke:0.25px #f4f4f4">736.8</div>
<div class="t" style="left:407.0px;top:284.50px;font-size:14px;color:#f4f4f4;letter-spacing:-0.6px;-webkit-text-stroke:0.25px #f4f4f4">3.2</div>
<div class="t" style="left:540.0px;top:284.50px;font-size:14px;color:#f4f4f4;letter-spacing:-0.6px;-webkit-text-stroke:0.25px #f4f4f4">167</div>
<div class="abs st" style="left:650px;top:282.45px"></div>
<div class="abs" style="left:0;top:312.85px;width:729px;height:1px;background:#1e2124"></div>
<div class="t" style="left:15.0px;top:326.17px;font-size:14px;color:#f4f4f4;letter-spacing:-0.6px;-webkit-text-stroke:0.25px #f4f4f4">INV01.S07</div>
<div class="t" style="left:140.0px;top:326.17px;font-size:14px;color:#f4f4f4;letter-spacing:-0.6px;-webkit-text-stroke:0.25px #f4f4f4">2.3</div>
<div class="t" style="left:276.0px;top:326.17px;font-size:14px;color:#f4f4f4;letter-spacing:-0.6px;-webkit-text-stroke:0.25px #f4f4f4">742.8</div>
<div class="t" style="left:407.0px;top:326.17px;font-size:14px;color:#f4f4f4;letter-spacing:-0.6px;-webkit-text-stroke:0.25px #f4f4f4">3.1</div>
<div class="t" style="left:540.0px;top:326.17px;font-size:14px;color:#f4f4f4;letter-spacing:-0.6px;-webkit-text-stroke:0.25px #f4f4f4">162</div>
<div class="abs st" style="left:650px;top:324.12px"></div>
<div class="abs" style="left:0;top:354.52px;width:729px;height:1px;background:#1e2124"></div>
<div class="t" style="left:15.0px;top:367.84px;font-size:14px;color:#f4f4f4;letter-spacing:-0.6px;-webkit-text-stroke:0.25px #f4f4f4">INV01.S08</div>
<div class="t" style="left:140.0px;top:367.84px;font-size:14px;color:#f4f4f4;letter-spacing:-0.6px;-webkit-text-stroke:0.25px #f4f4f4">2.4</div>
<div class="t" style="left:276.0px;top:367.84px;font-size:14px;color:#f4f4f4;letter-spacing:-0.6px;-webkit-text-stroke:0.25px #f4f4f4">745</div>
<div class="t" style="left:407.0px;top:367.84px;font-size:14px;color:#f4f4f4;letter-spacing:-0.6px;-webkit-text-stroke:0.25px #f4f4f4">3.2</div>
<div class="t" style="left:540.0px;top:367.84px;font-size:14px;color:#f4f4f4;letter-spacing:-0.6px;-webkit-text-stroke:0.25px #f4f4f4">156</div>
<div class="abs st" style="left:650px;top:365.79px"></div>
<div class="abs" style="left:0;top:396.19px;width:729px;height:1px;background:#1e2124"></div>
<div class="t" style="left:15.0px;top:409.51px;font-size:14px;color:#f4f4f4;letter-spacing:-0.6px;-webkit-text-stroke:0.25px #f4f4f4">INV01.S09</div>
<div class="t" style="left:140.0px;top:409.51px;font-size:14px;color:#f4f4f4;letter-spacing:-0.6px;-webkit-text-stroke:0.25px #f4f4f4">2.3</div>
<div class="t" style="left:276.0px;top:409.51px;font-size:14px;color:#f4f4f4;letter-spacing:-0.6px;-webkit-text-stroke:0.25px #f4f4f4">745</div>
<div class="t" style="left:407.0px;top:409.51px;font-size:14px;color:#f4f4f4;letter-spacing:-0.6px;-webkit-text-stroke:0.25px #f4f4f4">3.1</div>
<div class="t" style="left:540.0px;top:409.51px;font-size:14px;color:#f4f4f4;letter-spacing:-0.6px;-webkit-text-stroke:0.25px #f4f4f4">169</div>
<div class="abs st" style="left:650px;top:407.46px"></div>
<div class="abs" style="left:0;top:437.86px;width:729px;height:1px;background:#1e2124"></div>
<div class="t" style="left:15.0px;top:451.18px;font-size:14px;color:#f4f4f4;letter-spacing:-0.6px;-webkit-text-stroke:0.25px #f4f4f4">INV01.S10</div>
<div class="t" style="left:140.0px;top:451.18px;font-size:14px;color:#f4f4f4;letter-spacing:-0.6px;-webkit-text-stroke:0.25px #f4f4f4">2.3</div>
<div class="t" style="left:276.0px;top:451.18px;font-size:14px;color:#f4f4f4;letter-spacing:-0.6px;-webkit-text-stroke:0.25px #f4f4f4">748.9</div>
<div class="t" style="left:407.0px;top:451.18px;font-size:14px;color:#f4f4f4;letter-spacing:-0.6px;-webkit-text-stroke:0.25px #f4f4f4">3.1</div>
<div class="t" style="left:540.0px;top:451.18px;font-size:14px;color:#f4f4f4;letter-spacing:-0.6px;-webkit-text-stroke:0.25px #f4f4f4">181</div>
<div class="abs st" style="left:650px;top:449.13px"></div>
</div>
<svg class="abs" style="left:1912px;top:290px" width="9" height="6" viewBox="0 0 9 6"><path d="M0.5 5.5H8.5L4.5 0.5Z" fill="#d8d8d8"/></svg>
<div class="abs" style="left:1914px;top:300px;width:6px;height:514px;background:#c4c4c4;border-radius:3px"></div>
<svg class="abs" style="left:1912px;top:897px" width="9" height="6" viewBox="0 0 9 6"><path d="M0.5 0.5H8.5L4.5 5.5Z" fill="#d8d8d8"/></svg>
<svg class="abs" style="left:1959px;top:112px" width="10" height="7" viewBox="0 0 10 7"><path d="M0.5 6.5H9.5L5 0.5Z" fill="#c8c8c8"/></svg>
<div class="abs" style="left:1961px;top:218px;width:6.5px;height:739px;background:#c4c4c4;border-radius:3.2px"></div>
<svg class="abs" style="left:1959px;top:960px" width="10" height="7" viewBox="0 0 10 7"><path d="M0.5 0.5H9.5L5 6.5Z" fill="#c8c8c8"/></svg>
</body></html>
